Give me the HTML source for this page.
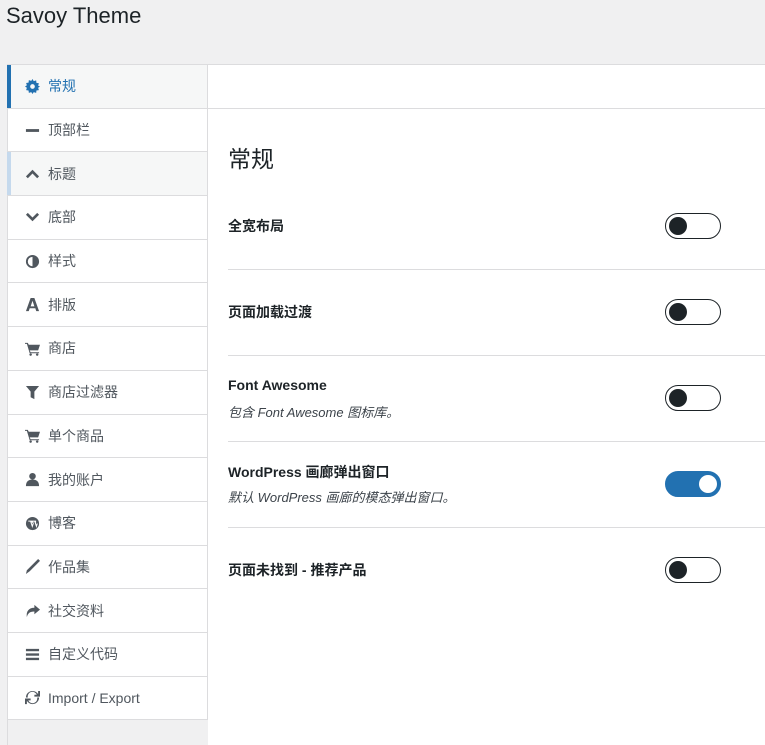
<!DOCTYPE html>
<html><head><meta charset="utf-8"><style>
*{box-sizing:border-box;margin:0;padding:0}
body{width:765px;height:745px;overflow:hidden;background:#f0f0f1;font-family:"Liberation Sans","Noto Sans CJK SC",sans-serif;color:#1d2327;position:relative}
.title{position:absolute;left:6px;top:3px;font-size:22px;color:#1d2327}
.side{position:absolute;left:7px;top:64px;width:201px;height:681px;background:#f0f0f1;border-left:1px solid #dcdcde;border-top:1px solid #dcdcde}
.item{height:43.7px;border-bottom:1px solid #dcdcde;background:#fff;display:flex;align-items:center;padding-left:17px;font-size:14px;color:#50575e;position:relative;border-right:1px solid #dcdcde}
.item svg{width:15px;height:15px;margin-right:8px;fill:#50575e}
.item.act{background:#f6f7f7;color:#2271b1}
.item.act::before{content:"";position:absolute;left:-1px;top:0;bottom:0;width:4px;background:#2271b1}
.item.act svg{fill:#2271b1}
.item.hov{background:#f6f7f7}
.item.hov::before{content:"";position:absolute;left:-1px;top:0;bottom:0;width:4px;background:#c5d9ed}
.main{position:absolute;left:208px;top:64px;right:0;bottom:0;background:#fff;border-top:1px solid #dcdcde}
.hdr{height:44px;border-bottom:1px solid #dcdcde}
h2{position:absolute;left:20px;top:75px;font-size:23px;font-weight:normal}
.row{position:absolute;left:20px;right:0;height:86px;border-bottom:1px solid #dcdcde}
.lbl{position:absolute;left:0;font-size:14px;font-weight:bold;color:#1d2327}
.desc{position:absolute;left:0;font-size:13px;font-style:italic;color:#3c434a}
.tg{position:absolute;left:437px;width:56px;height:26px;border:1px solid #1d2327;border-radius:13px;background:#fff}
.tg::after{content:"";position:absolute;left:3px;top:3px;width:18px;height:18px;border-radius:50%;background:#1d2327}
.tg.on{background:#2271b1;border-color:#2271b1}
.tg.on::after{left:33px;background:#fff}
</style></head><body>
<div class="title">Savoy Theme</div>
<div class="side">
<div class="item act"><svg viewBox="0 0 16 16"><path d="M8 0l1.3 2.3 2.6-.8.3 2.6 2.6.4-.8 2.5L16 8l-2 1.3.8 2.5-2.6.4-.3 2.6-2.6-.8L8 16l-1.3-2-2.6.8-.3-2.6-2.6-.4.8-2.5L0 8l2-1.3-.8-2.5 2.6-.4.3-2.6 2.6.8z"/><circle cx="8" cy="8" r="2.5" fill="#f6f7f7"/></svg>常规</div>
<div class="item"><svg viewBox="0 0 16 16"><rect x="1" y="6.5" width="14" height="3"/></svg>顶部栏</div>
<div class="item hov"><svg viewBox="0 0 16 16"><path d="M1 11l7-7 7 7-2 2-5-5-5 5z"/></svg>标题</div>
<div class="item"><svg viewBox="0 0 16 16"><path d="M1 5l7 7 7-7-2-2-5 5-5-5z"/></svg>底部</div>
<div class="item"><svg viewBox="0 0 16 16"><path d="M8 1a7 7 0 100 14A7 7 0 008 1zm0 2v10a5 5 0 010-10z"/></svg>样式</div>
<div class="item"><svg viewBox="0 0 16 16"><path d="M6 1h4l5 14h-3l-1-3H5l-1 3H1zm2 3l-2 6h4z"/></svg>排版</div>
<div class="item"><svg viewBox="0 0 16 16"><path d="M0 2h3l1 2h12l-2 6H5l1 2h9v1H5L2 3H0z"/><circle cx="6" cy="14.5" r="1.3"/><circle cx="13" cy="14.5" r="1.3"/></svg>商店</div>
<div class="item"><svg viewBox="0 0 16 16"><path d="M1 1h14L10 7v8L6 13V7z"/></svg>商店过滤器</div>
<div class="item"><svg viewBox="0 0 16 16"><path d="M0 2h3l1 2h12l-2 6H5l1 2h9v1H5L2 3H0z"/><circle cx="6" cy="14.5" r="1.3"/><circle cx="13" cy="14.5" r="1.3"/></svg>单个商品</div>
<div class="item"><svg viewBox="0 0 16 16"><circle cx="8" cy="4.5" r="3.5"/><path d="M1 15c0-5 3-7 7-7s7 2 7 7z"/></svg>我的账户</div>
<div class="item"><svg viewBox="0 0 16 16"><path d="M8 1a7 7 0 100 14A7 7 0 008 1z"/><path d="M3.5 5.5h3.5v1H6.3l1.5 4.5 1-3-.5-1.5H7.8v-1h3.5v1h-.6l1.5 4.5.9-3" fill="none" stroke="#fff" stroke-width="1.1"/></svg>博客</div>
<div class="item"><svg viewBox="0 0 16 16"><path d="M14 0l2 2L5 13l-4 3 1-4z"/></svg>作品集</div>
<div class="item"><svg viewBox="0 0 16 16"><path d="M10 2l6 5-6 5V9C5 9 3 11 2 15 1 9 4 5 10 5z"/></svg>社交资料</div>
<div class="item"><svg viewBox="0 0 16 16"><rect x="1" y="2" width="14" height="2.5"/><rect x="1" y="6.8" width="14" height="2.5"/><rect x="1" y="11.5" width="14" height="2.5"/></svg>自定义代码</div>
<div class="item"><svg viewBox="0 0 16 16"><path d="M8 1a7 7 0 016 3.5V1h2v6h-6V5h2.5A5 5 0 003 8H1a7 7 0 017-7zm0 14a7 7 0 01-6-3.5V15H0V9h6v2H3.5A5 5 0 0013 8h2a7 7 0 01-7 7z"/></svg>Import / Export</div>
</div>
<div class="main">
<div class="hdr"></div>
<h2>常规</h2>
<div>
<div class="row" style="top:119px"><div class="lbl" style="top:32px">全宽布局</div><div class="tg" style="top:29px"></div></div>
<div class="row" style="top:205px"><div class="lbl" style="top:32px">页面加载过渡</div><div class="tg" style="top:29px"></div></div>
<div class="row" style="top:291px"><div class="lbl" style="top:21px">Font Awesome</div><div class="desc" style="top:46px">包含 Font Awesome 图标库。</div><div class="tg" style="top:29px"></div></div>
<div class="row" style="top:377px"><div class="lbl" style="top:20px">WordPress 画廊弹出窗口</div><div class="desc" style="top:45px">默认 WordPress 画廊的模态弹出窗口。</div><div class="tg on" style="top:29px"></div></div>
<div class="row" style="top:463px;border-bottom:none"><div class="lbl" style="top:32px">页面未找到 - 推荐产品</div><div class="tg" style="top:29px"></div></div>
</div>
</div>
</body></html>
